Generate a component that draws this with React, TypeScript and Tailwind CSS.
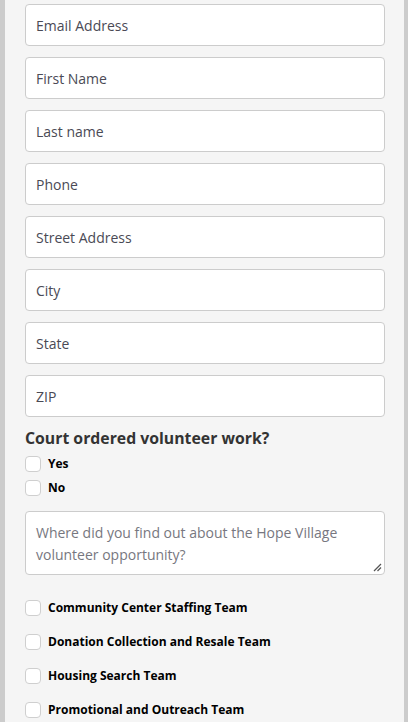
import React from "react";

const fields = ["Email Address", "First Name", "Last name", "Phone", "Street Address", "City", "State", "ZIP"];
const teams = [
  "Community Center Staffing Team",
  "Donation Collection and Resale Team",
  "Housing Search Team",
  "Promotional and Outreach Team",
];

function Box() {
  return <span className="block w-[16px] h-[16px] rounded-[4px] border border-[#cfcfcf] bg-white shrink-0" />;
}

export default function App() {
  return (
    <div
      className="w-[408px] h-[722px] overflow-hidden bg-[#f5f5f5] border-l-[5px] border-r-[4px] border-[#cccccc]"
      style={{ fontFamily: '"Open Sans", "Liberation Sans", sans-serif' }}
    >
      <div className="pl-[20px] pr-[19px] pt-[4px] flex flex-col">
        {fields.map((f) => (
          <div
            key={f}
            className="h-[42px] mb-[11px] bg-white border border-[#cccccc] rounded-[4px] flex items-center pl-[10px] text-[14px] text-[#4a4a55]"
          >
            {f}
          </div>
        ))}
        <div className="mt-[-1px] text-[15.8px] font-bold text-[#333333] leading-[22px]">Court ordered volunteer work?</div>
        <div className="mt-[7px] flex items-center gap-[7px] h-[16px]">
          <Box />
          <span className="text-[12px] font-bold text-black">Yes</span>
        </div>
        <div className="mt-[8px] flex items-center gap-[7px] h-[16px]">
          <Box />
          <span className="text-[12px] font-bold text-black">No</span>
        </div>
        <div className="mt-[15px] h-[64px] bg-white border border-[#cccccc] rounded-[4px] pl-[10px] pt-[10px] pr-[10px] relative text-[14px] leading-[22px] text-[#777780]">
          Where did you find out about the Hope Village volunteer opportunity?
          <svg className="absolute right-[2px] bottom-[2px]" width="9" height="9" viewBox="0 0 9 9">
            <line x1="1" y1="8" x2="8" y2="1" stroke="#555" strokeWidth="1.3" />
            <line x1="4.5" y1="8" x2="8" y2="4.5" stroke="#555" strokeWidth="1.3" />
          </svg>
        </div>
        <div className="mt-[25px] flex flex-col gap-[18px]">
          {teams.map((t) => (
            <div key={t} className="flex items-center gap-[7px] h-[16px]">
              <Box />
              <span className="text-[12px] font-bold text-black">{t}</span>
            </div>
          ))}
        </div>
      </div>
    </div>
  );
}
